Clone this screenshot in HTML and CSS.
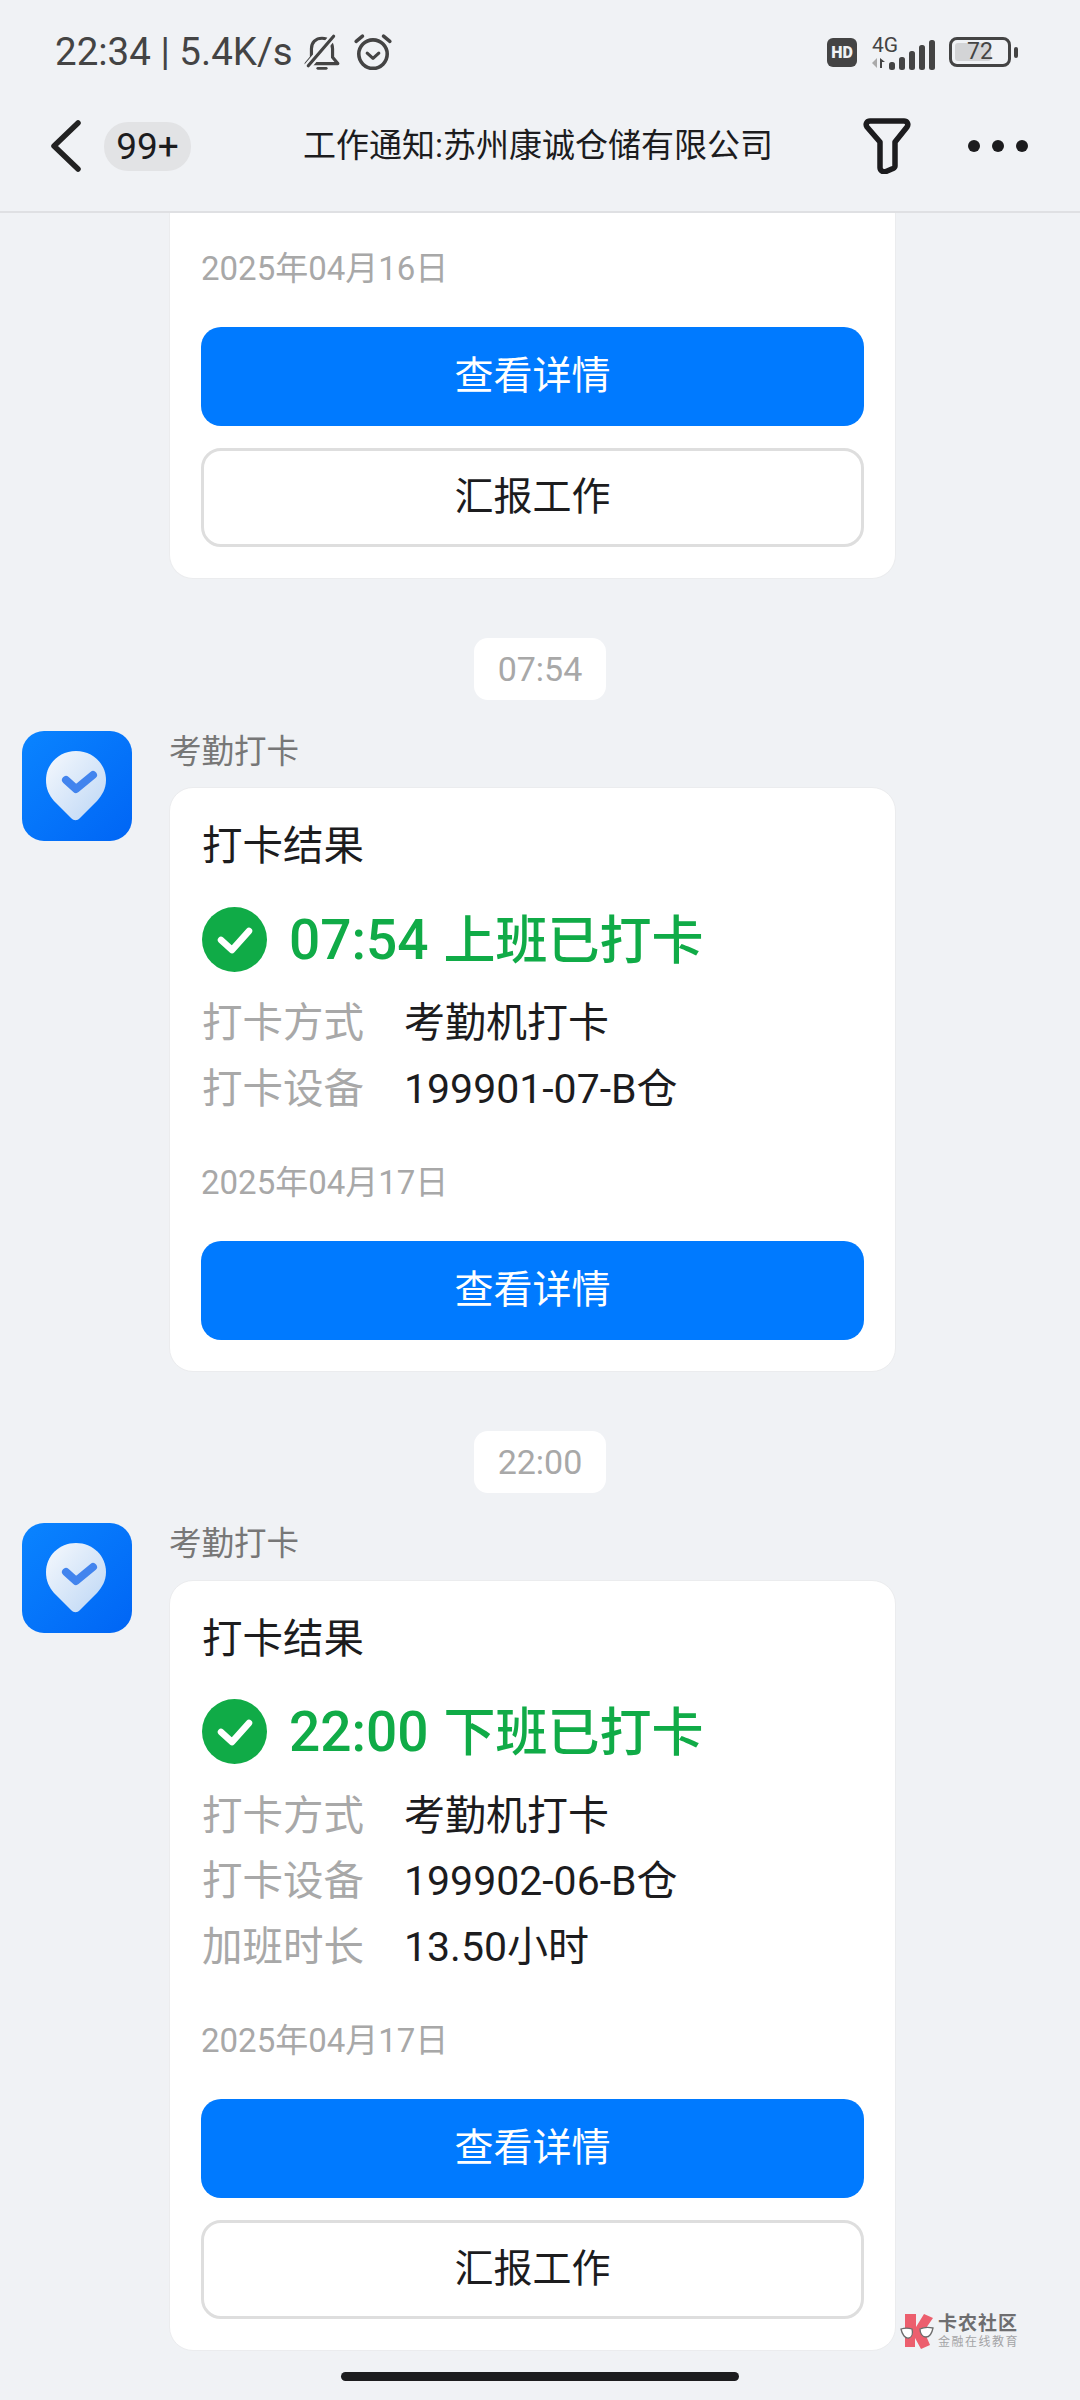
FILE: index.html
```html
<!doctype html>
<html lang="zh-CN">
<head>
  <meta charset="utf-8">
  <title>工作通知</title>
  <link rel="stylesheet" href="styles.css">
</head>
<body>
  <div class="phone">
    <header class="top">
      <div class="status">
        <span class="clock">22:34 | 5.4K/s</span>
        <svg class="ic-bell" viewBox="0 0 36 36" width="38" height="38" fill="none" stroke="#444" stroke-width="3" stroke-linecap="round" stroke-linejoin="round">
          <path d="M3 29h30l-5-6V15c0-6-4-10-10-10S8 9 8 15v8z"/>
          <path d="M14 33.500h8" stroke-width="2.600"/>
          <path d="M5 31L29 3" stroke="#f0f2f5" stroke-width="7"/>
          <path d="M5 31L29 3"/>
        </svg>
        <svg class="ic-alarm" viewBox="0 0 38 38" width="40" height="40" fill="none" stroke="#444" stroke-linecap="round" stroke-linejoin="round">
          <circle cx="19" cy="21" r="13.500" stroke-width="3.400"/>
          <path d="M13.500 20l5.500 5 5.500-5" stroke-width="3"/>
          <path d="M3 9l6-5M35 9l-6-5" stroke-width="3.400"/>
        </svg>
        <span class="status-gap"></span>
        <span class="hd">HD</span>
        <div class="net">
          <span class="net-4g">4G</span>
          <svg class="net-arrows" viewBox="0 0 14 12" width="14" height="12">
            <path d="M5 1v10L0 6z" fill="#aaa"/>
            <path d="M8 1l5 4H10v6H8z" fill="#444"/>
          </svg>
        </div>
        <svg class="bars" viewBox="0 0 46 30" width="46" height="30" fill="#444">
          <rect x="0" y="22" width="6" height="8" rx="2.500"/>
          <rect x="10" y="17" width="6" height="13" rx="2.500"/>
          <rect x="20" y="11" width="6" height="19" rx="2.500"/>
          <rect x="30" y="5" width="6" height="25" rx="2.500"/>
          <rect x="40" y="0" width="6" height="30" rx="2.500"/>
        </svg>
        <div class="battery"><span class="battery-fill"></span><span class="battery-num">72</span></div>
        <span class="battery-nub"></span>
      </div>
      <nav class="nav">
        <svg class="back" viewBox="0 0 30 52" width="30" height="52" fill="none" stroke="#222" stroke-width="5.500" stroke-linecap="round" stroke-linejoin="round">
          <path d="M27 3L3 26l24 23"/>
        </svg>
        <span class="count">99+</span>
        <h1 class="title">工作通知:苏州康诚仓储有限公司</h1>
        <svg class="filter" viewBox="0 0 48 56" width="48" height="56" fill="none" stroke="#1c1c1e" stroke-width="5.500" stroke-linejoin="round">
          <path d="M7 3h34c3 0 5 3 3 6L32 24v24c0 1-1 2-2 2.500l-7 3c-3 1-6-1-6-4V24L4 9C2 6 4 3 7 3z"/>
        </svg>
        <div class="dots"><i></i><i></i><i></i></div>
      </nav>
    </header>

    <main class="feed">
      <section class="card card-cut">
        <p class="date">2025年04月16日</p>
        <a class="btn btn-blue">查看详情</a>
        <a class="btn btn-line">汇报工作</a>
      </section>

      <div class="stamp">07:54</div>
      <article class="msg">
        <svg class="avatar" viewBox="0 0 110 110" width="110" height="110">
          <defs>
            <linearGradient id="bgA" x1="0" y1="0" x2="1" y2="1">
              <stop offset="0" stop-color="#0a84ff"/>
              <stop offset="1" stop-color="#0065f5"/>
            </linearGradient>
            <linearGradient id="pinA" x1="0" y1="0" x2="1" y2="1">
              <stop offset="0" stop-color="#f6f9fd"/>
              <stop offset="1" stop-color="#bcd6f5"/>
            </linearGradient>
          </defs>
          <rect width="110" height="110" rx="22" fill="url(#bgA)"/>
          <path d="M54 20c17 0 30 13 30 29 0 9-4 15-9 21L58 87c-3 3-6 3-9 0L32 70c-5-6-8-12-8-21 0-16 13-29 30-29z" fill="url(#pinA)"/>
          <path d="M44 49l10 9 17-14" fill="none" stroke="#4284ee" stroke-width="8" stroke-linecap="round" stroke-linejoin="round"/>
        </svg>
        <div class="msg-body">
          <div class="sender">考勤打卡</div>
          <section class="card">
            <h2 class="card-title">打卡结果</h2>
            <div class="result">
              <svg viewBox="0 0 65 65" width="65" height="65">
                <circle cx="32.500" cy="32.500" r="32.500" fill="#10ab47"/>
                <path d="M19 33l11 10 17-19" fill="none" stroke="#fff" stroke-width="6.500" stroke-linecap="round" stroke-linejoin="round"/>
              </svg>
              <span><b>07:54</b> 上班已打卡</span>
            </div>
            <dl class="rows">
              <div class="row"><dt>打卡方式</dt><dd>考勤机打卡</dd></div>
              <div class="row"><dt>打卡设备</dt><dd>199901-07-B仓</dd></div>
            </dl>
            <p class="date">2025年04月17日</p>
            <a class="btn btn-blue">查看详情</a>
          </section>
        </div>
      </article>

      <div class="stamp">22:00</div>
      <article class="msg">
        <svg class="avatar" viewBox="0 0 110 110" width="110" height="110">
          <rect width="110" height="110" rx="22" fill="url(#bgA)"/>
          <path d="M54 20c17 0 30 13 30 29 0 9-4 15-9 21L58 87c-3 3-6 3-9 0L32 70c-5-6-8-12-8-21 0-16 13-29 30-29z" fill="url(#pinA)"/>
          <path d="M44 49l10 9 17-14" fill="none" stroke="#4284ee" stroke-width="8" stroke-linecap="round" stroke-linejoin="round"/>
        </svg>
        <div class="msg-body">
          <div class="sender">考勤打卡</div>
          <section class="card">
            <h2 class="card-title">打卡结果</h2>
            <div class="result">
              <svg viewBox="0 0 65 65" width="65" height="65">
                <circle cx="32.500" cy="32.500" r="32.500" fill="#10ab47"/>
                <path d="M19 33l11 10 17-19" fill="none" stroke="#fff" stroke-width="6.500" stroke-linecap="round" stroke-linejoin="round"/>
              </svg>
              <span><b>22:00</b> 下班已打卡</span>
            </div>
            <dl class="rows">
              <div class="row"><dt>打卡方式</dt><dd>考勤机打卡</dd></div>
              <div class="row"><dt>打卡设备</dt><dd>199902-06-B仓</dd></div>
              <div class="row"><dt>加班时长</dt><dd>13.50小时</dd></div>
            </dl>
            <p class="date">2025年04月17日</p>
            <a class="btn btn-blue">查看详情</a>
            <a class="btn btn-line">汇报工作</a>
          </section>
        </div>
      </article>
    </main>

    <div class="mark">
      <svg viewBox="0 0 34 36" width="34" height="36">
        <path d="M5 1h11v13l8-13 9 4-9 13 6 14-9 4-6-11v9H5z" fill="#ec5f6e"/>
        <path d="M1 16c3-1 8-1 11 0 1 4 0 8-3 9-4 1-7-4-8-9zM20 16c4-2 9-2 13-1-1 5-3 9-7 9-4 0-6-4-6-8z" fill="#fff" stroke="#6c6c6c" stroke-width="1.300"/>
      </svg>
      <div class="mark-text">
        <b>卡农社区</b>
        <small>金融在线教育</small>
      </div>
    </div>
    <div class="home-bar"></div>
  </div>
</body>
</html>
```

FILE: styles.css
```css
* {
  box-sizing: border-box;
}
html, body {
  margin: 0;
  padding: 0;
}
body {
  font-family: Roboto, "Noto Sans CJK SC", sans-serif;
  background-color: #f0f2f5;
  color: #1c1c1e;
}
.phone {
  position: relative;
  width: 1080px;
  height: 2400px;
  overflow: hidden;
  background-color: #f0f2f5;
}

/* top bars */
.top {
  height: 213px;
  border-bottom: 2px solid #dfe0e3;
}
.status {
  display: flex;
  align-items: center;
  height: 104px;
  padding-left: 55px;
  color: #444;
}
.clock {
  font-size: 38.500px;
  line-height: 44px;
  width: 248px;
}
.ic-bell {
  margin-right: 12px;
}
.status-gap {
  flex: 1;
}
.hd {
  width: 30px;
  height: 29px;
  border-radius: 6px;
  background-color: #444;
  color: #f0f2f5;
  font-size: 16px;
  font-weight: 900;
  line-height: 29px;
  text-align: center;
}
.net {
  display: flex;
  flex-direction: column;
  width: 16px;
  margin-left: 15px;
}
.net-4g {
  font-size: 21px;
  line-height: 20px;
  margin-bottom: 2px;
}
.bars {
  margin: 6px 0 0 1px;
  width: 46px;
}
.battery {
  position: relative;
  width: 62px;
  height: 30px;
  margin-left: 14px;
  border: 3px solid #444;
  border-radius: 8px;
  font-size: 23px;
  line-height: 24px;
  text-align: center;
}
.battery-fill {
  position: absolute;
  left: 3px;
  top: 3px;
  bottom: 3px;
  width: 36px;
  background-color: #d3d4d6;
  border-radius: 3px;
}
.battery-num {
  position: relative;
}
.battery-nub {
  width: 4px;
  height: 11px;
  margin: 0 62px 0 3px;
  background-color: #444;
  border-radius: 2px;
}
.nav {
  display: flex;
  align-items: center;
  height: 84px;
  padding-left: 51px;
}
.count {
  width: 87px;
  height: 49px;
  margin-left: 23px;
  border-radius: 24px;
  background-color: #e2e3e5;
  font-size: 37px;
  line-height: 49px;
  text-align: center;
}
.title {
  width: 468px;
  margin: 0 0 0 112px;
  font-size: 33px;
  font-weight: 400;
  line-height: 44px;
  white-space: nowrap;
}
.filter {
  margin-left: 92px;
}
.dots {
  display: flex;
  gap: 12px;
  margin-left: 57px;
}
.dots i {
  width: 12px;
  height: 12px;
  border-radius: 50%;
  background-color: #1c1c1e;
}

/* message list */
.feed {
  display: flex;
  flex-direction: column;
}
.card {
  width: 727px;
  padding: 33px 31px 31px 31px;
  background-color: #fff;
  border: 1px solid #ebecee;
  border-radius: 24px;
}
.card-cut {
  margin-left: 169px;
  padding-top: 36px;
  padding-bottom: 31px;
  border-top: none;
  border-radius: 0 0 24px 24px;
}
.stamp {
  align-self: center;
  margin: 59px 0 30.500px;
  padding: 0 24px;
  height: 62px;
  background-color: #fff;
  border-radius: 14px;
  color: #a8a8a8;
  font-size: 34px;
  line-height: 62px;
}
.msg {
  display: flex;
  gap: 37px;
  padding-left: 22px;
}
.avatar {
  flex: none;
}
.sender {
  margin-top: 1px;
  margin-bottom: 15.500px;
  color: #777;
  font-size: 32.500px;
  line-height: 40px;
}
.card-title {
  margin: 0 0 38px 1px;
  font-size: 40.500px;
  font-weight: 400;
  line-height: 50px;
  color: #1c1c1e;
}
.result {
  display: flex;
  align-items: center;
  gap: 22px;
  margin: 0 0 22px 1px;
  height: 60px;
  color: #10ab47;
  font-size: 52px;
  font-weight: 500;
}
.result span {
  padding-bottom: 6px;
}
.result b {
  margin-right: 2px;
  font-size: 55px;
  font-weight: 500;
}
.rows {
  margin: 0 0 40.500px;
}
.row {
  display: flex;
  height: 65.500px;
  margin-left: 1px;
  font-size: 41px;
  line-height: 65px;
}
.row dt {
  width: 202px;
  color: #a8a8a8;
  font-size: 40.500px;
}
.row dd {
  margin: 0;
  color: #1c1c1e;
}
.date {
  margin: 0 0 38px;
  color: #a8a8a8;
  font-size: 33px;
  line-height: 40px;
}
.btn {
  display: block;
  height: 99px;
  border-radius: 20px;
  font-size: 39px;
  line-height: 99px;
  text-align: center;
}
.btn-blue {
  background-color: #007aff;
  color: #fff;
}
.btn-line {
  margin-top: 22px;
  border: 3px solid #dedede;
  line-height: 93px;
  color: #1c1c1e;
}

/* overlays */
.mark {
  position: absolute;
  left: 900px;
  top: 2313px;
  display: flex;
  gap: 4px;
}
.mark-text {
  display: flex;
  flex-direction: column;
}
.mark-text b {
  color: #6e6e70;
  font-size: 19px;
  line-height: 22px;
  letter-spacing: 1px;
  white-space: nowrap;
}
.mark-text small {
  color: #a4a4a6;
  font-size: 12px;
  line-height: 14px;
  letter-spacing: 1.500px;
  white-space: nowrap;
}
.home-bar {
  position: absolute;
  left: 341px;
  top: 2372px;
  width: 398px;
  height: 9px;
  border-radius: 5px;
  background-color: #1c1c1e;
}
```
